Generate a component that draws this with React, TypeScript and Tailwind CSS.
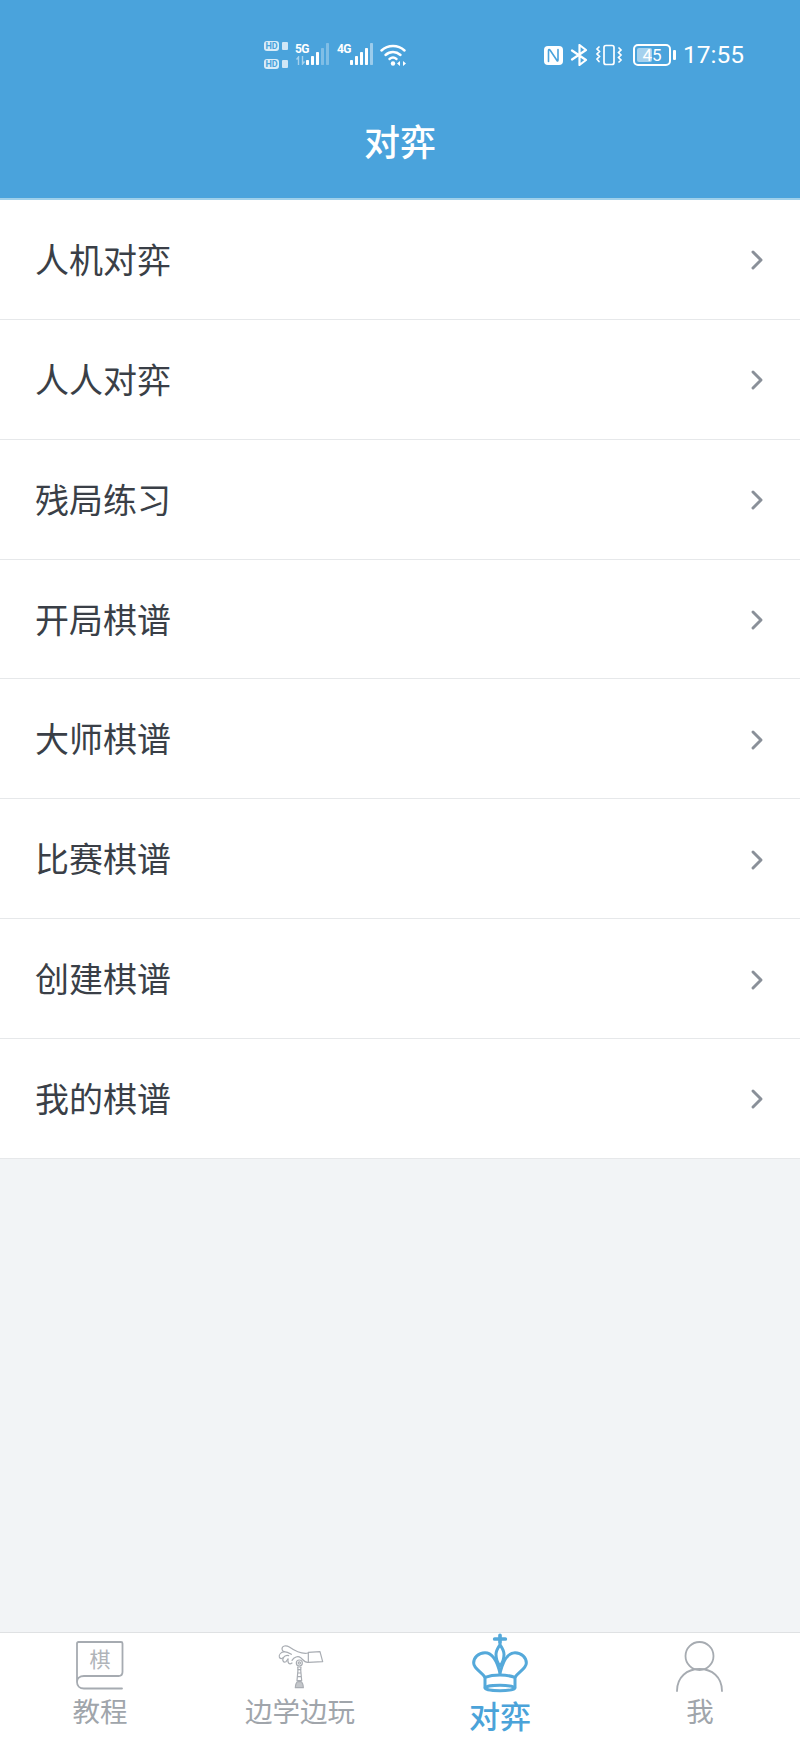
const font = "font-['Noto_Sans_CJK_SC','Noto_Sans',sans-serif]";

const rows = ['人机对弈', '人人对弈', '残局练习', '开局棋谱', '大师棋谱', '比赛棋谱', '创建棋谱', '我的棋谱'];

function Signal({ active, dim = 0 }: { active: number; dim?: number }) {
  const heights = [5, 9, 13, 17, 22];
  return (
    <svg width="23" height="22" viewBox="0 0 23 22">
      {heights.map((h, i) => (
        <rect
          key={i}
          x={i * 5}
          y={22 - h}
          width="3"
          height={h}
          rx="0.7"
          fill="#fff"
          opacity={i < active ? 1 : dim}
        />
      ))}
    </svg>
  );
}

function HdTag() {
  return (
    <div className="flex items-center gap-[3px]">
      <span className="flex h-[10px] w-[15px] items-center justify-center rounded-[3px] bg-[#d9ecf8] font-['Roboto',sans-serif] text-[9px] font-bold leading-none text-[#4aa3dc]">
        HD
      </span>
      <span className="h-[8px] w-[6px] rounded-[1px] bg-[#cfe6f6]" />
    </div>
  );
}

function StatusBar() {
  return (
    <div className="flex h-[110px] items-center text-white">
      <div className="ml-[264px] flex flex-col gap-[8px]">
        <HdTag />
        <HdTag />
      </div>
      <div className="relative ml-[7px] h-[28px] w-[34px]">
        <span className="absolute left-0 top-[2px] font-['Roboto',sans-serif] text-[12px] font-bold leading-none tracking-tighter">5G</span>
        <svg className="absolute bottom-[4px] left-[1px] opacity-50" width="9" height="9" viewBox="0 0 9 9" fill="none" stroke="#fff" strokeWidth="1.4">
          <path d="M2.500 9V1L0.500 3.500M6.500 0v8l2-2.500" />
        </svg>
        <div className="absolute bottom-[4px] right-0">
          <Signal active={3} dim={0.3} />
        </div>
      </div>
      <div className="relative ml-[8px] h-[28px] w-[36px]">
        <span className="absolute left-0 top-[2px] font-['Roboto',sans-serif] text-[12px] font-bold leading-none tracking-tighter">4G</span>
        <div className="absolute bottom-[4px] right-0">
          <Signal active={4} dim={0.45} />
        </div>
      </div>
      <svg className="ml-[7px]" width="28" height="24" viewBox="0 0 28 24" fill="none" stroke="#fff" strokeWidth="2.4" strokeLinecap="round">
        <path d="M1.500 7.500C8 1.500 18 1.500 24.500 7.500" />
        <path d="M5.500 12C10 8 16 8 20.500 12" />
        <path d="M9.500 16C11.500 14.400 14.500 14.400 16.500 16" />
        <circle cx="13" cy="20.500" r="2.200" fill="#fff" stroke="none" />
        <path d="M20 18l-3 2.500 3 2.500zM23 18l3 2.500-3 2.500z" fill="#fff" stroke="none" />
      </svg>
      <svg className="ml-[135px]" width="21" height="21" viewBox="0 0 21 21" fill="none">
        <rect x="1" y="1" width="19" height="19" rx="4" fill="#fff" />
        <path d="M5.500 16.500V5.500c0-1 1-1.300 1.500-.5l7 10.500c.5.800 1 .5 1-.5V4.500" stroke="#4aa3dc" strokeWidth="1.600" strokeLinecap="round" />
      </svg>
      <svg className="ml-[6px]" width="19" height="22" viewBox="0 0 19 22" fill="none" stroke="#fff" strokeWidth="2.200" strokeLinejoin="round" strokeLinecap="round">
        <path d="M2 6.500l14 9.500-6.500 5V1L16 6 2 15.500" />
      </svg>
      <svg className="ml-[6px]" width="28" height="22" viewBox="0 0 28 22" fill="none" stroke="#fff" strokeWidth="1.700" strokeLinecap="round">
        <rect x="9" y="1.500" width="10" height="19" rx="2" />
        <path d="M4 3l-2 2 2.500 2.500L2 10l2.500 2.500L2 15l2 2.500M24 4l2 2-2.500 2.500L26 11l-2.500 2.500L26 16l-2 2" />
      </svg>
      <div className="ml-[10px] flex items-center gap-[2px]">
        <div className="relative flex h-[22px] w-[38px] items-center justify-center rounded-[5px] border-[2px] border-white">
          <div className="absolute bottom-[2px] left-[2px] top-[2px] w-[15px] rounded-[2px] bg-[#a5d1ee]" />
          <span className="relative font-['Roboto',sans-serif] text-[17px] leading-none">45</span>
        </div>
        <div className="h-[10px] w-[3px] rounded-[1px] bg-white" />
      </div>
      <span className="ml-[7px] font-['Roboto',sans-serif] text-[24.5px] leading-none">17:55</span>
    </div>
  );
}

function ListRow({ label }: { label: string }) {
  return (
    <div className="flex h-[119.86px] items-center justify-between border-b border-[#e6e8ea] pl-[35px] pr-[36px]">
      <span className="-mt-[1px] text-[34px] leading-none text-[#3a3f47]">{label}</span>
      <svg className="mt-[2px]" width="14" height="22" viewBox="0 0 14 22" fill="none" stroke="#8a9099" strokeWidth="3" strokeLinecap="round" strokeLinejoin="round">
        <path d="M3 3l8 8-8 8" />
      </svg>
    </div>
  );
}

function BookIcon() {
  return (
    <svg className="overflow-visible" width="50" height="50" viewBox="0 3 50 50" fill="none" stroke="#a6abb1" strokeWidth="1.800">
      <path d="M2 42V3.500C2 2.500 2.500 2 3.500 2H46c1 0 1.500.5 1.500 1.500V32c0 2.500-1.500 4-4 4H9c-4.500 0-7 2.500-7 6s2.500 6.500 7 6.500h38" strokeLinecap="round" />
      <text x="25" y="27" textAnchor="middle" fontSize="21" fill="#b0b4b9" stroke="none" fontFamily="'Noto Sans CJK SC', sans-serif">棋</text>
    </svg>
  );
}

function HandIcon() {
  return (
    <svg width="50" height="50" viewBox="15 12 150 150" fill="none" stroke="#a9adb3" strokeWidth="3.600" strokeLinecap="round" strokeLinejoin="round">
      <path d="M115 40L150 38L158 68L115 70Z" />
      <path d="M115 42C95 46 75 36 58 24C48 18 36 20 36 30C36 34 38 36 42 38" />
      <path d="M42 38C34 40 26 46 28 54C30 60 36 60 40 56" />
      <path d="M40 56C36 64 40 72 48 68L54 60" />
      <path d="M54 60C52 72 58 78 66 72" />
      <path d="M42 38C50 38 58 42 64 46M40 56C44 50 50 48 56 50" />
      <path d="M115 70C105 72 100 64 92 56C84 50 72 54 66 64" />
      <circle cx="88" cy="72" r="9" />
      <circle cx="88" cy="72" r="3.500" />
      <path d="M83 84H93L92 92H84Z" />
      <path d="M84 92L81 125H95L92 92M83 102H93M82 113H94" />
      <path d="M76 146C76 136 80 128 84 128H92C96 128 100 136 100 146Z" fill="#c3c6ca" />
    </svg>
  );
}

function CrownIcon() {
  return (
    <svg className="overflow-visible" width="60" height="62" viewBox="0 -8 180 186" fill="none" stroke="#55a9da" strokeWidth="9" strokeLinecap="round" strokeLinejoin="round">
      <path d="M90 5V27M74 16H106" strokeWidth="11" />
      <path d="M90 33C84 42 78 50 78 62C78 76 84 90 90 96C96 90 102 76 102 62C102 50 96 42 90 33Z" />
      <path d="M90 118C82 85 68 57 45 57C25 57 11 72 11 88C11 105 35 115 45 131V160" />
      <path d="M90 118C98 85 112 57 135 57C155 57 169 72 169 88C169 105 145 115 135 131V160" />
      <path d="M45 131C70 122 110 122 135 131" />
      <ellipse cx="90" cy="163" rx="45" ry="8" />
    </svg>
  );
}

function PersonIcon() {
  return (
    <svg width="50" height="52" viewBox="0 0 50 52" fill="none" stroke="#a6abb1" strokeWidth="1.800" strokeLinecap="round">
      <circle cx="24.500" cy="15" r="14" />
      <path d="M2 50C2 36 12 28 24.500 28S47 36 47 50" />
    </svg>
  );
}

function Tab({ label, active, children }: { label: string; active?: boolean; children: React.ReactNode }) {
  return (
    <div className="flex flex-1 flex-col items-center">
      <div className="flex h-[60px] items-end justify-center">{children}</div>
      <span
        className={
          active
            ? 'mt-[6px] text-[31px] font-medium leading-[31px] text-[#4ba3d9]'
            : 'mt-[3px] text-[27.5px] leading-[28px] text-[#a0a5ab]'
        }
      >
        {label}
      </span>
    </div>
  );
}

export default function App() {
  return (
    <div className={`flex h-[1737px] w-[800px] flex-col overflow-hidden bg-[#f2f4f6] ${font}`}>
      <div className="flex h-[200px] flex-col border-b-2 border-[#9fd0ea] bg-[#4aa3dc]">
        <StatusBar />
        <div className="flex flex-1 items-start justify-center pt-[5px] text-[36px] font-medium leading-[50px] text-white">对弈</div>
      </div>
      <div className="bg-white">
        {rows.map(r => (
          <ListRow key={r} label={r} />
        ))}
      </div>
      <div className="flex-1" />
      <div className="flex h-[105px] border-t border-[#dfe1e3] bg-white">
        <Tab label="教程"><BookIcon /></Tab>
        <Tab label="边学边玩"><HandIcon /></Tab>
        <Tab label="对弈" active><CrownIcon /></Tab>
        <Tab label="我"><PersonIcon /></Tab>
      </div>
    </div>
  );
}
